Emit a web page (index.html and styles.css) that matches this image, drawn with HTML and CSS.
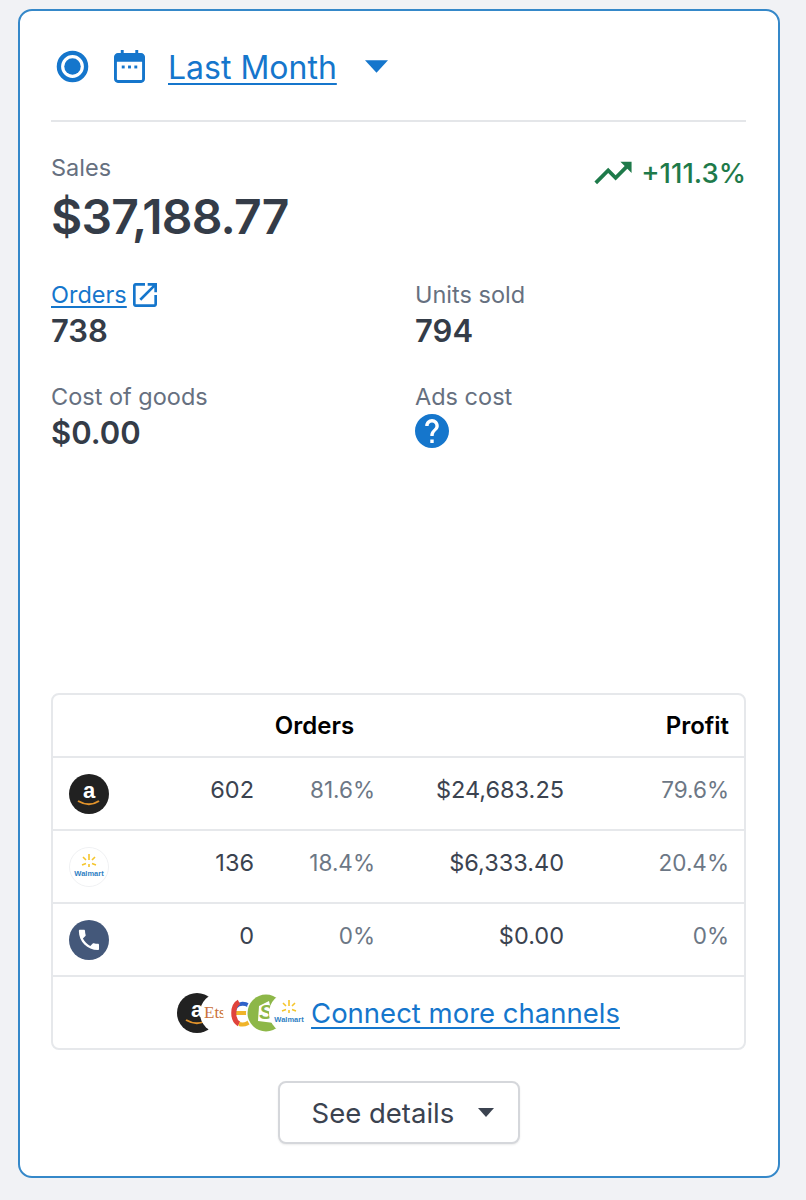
FILE: index.html
```html
<!DOCTYPE html>
<html>
<head>
    <meta charset="UTF-8">
    <link rel="stylesheet" href="styles.css">
</head>
<body>
    <div class="card">
        <div class="range">
            <svg class="radio-icon" viewBox="0 0 34 34"><circle cx="17" cy="17" r="14" fill="none" stroke="#1576cc" stroke-width="4.5"/><circle cx="17" cy="17" r="8.5" fill="#1576cc"/></svg>
            <svg class="cal-icon" viewBox="0 0 32 34"><path fill="#1576cc" d="M7 0h3v3h12V0h3v3h3c2 0 4 2 4 4v23c0 2-2 4-4 4H4c-2 0-4-2-4-4V7c0-2 2-4 4-4h3zM3 12v18c0 .6.4 1 1 1h24c.6 0 1-.4 1-1V12z"/><rect x="8" y="16" width="3" height="3" fill="#1576cc"/><rect x="14.500" y="16" width="3" height="3" fill="#1576cc"/><rect x="21" y="16" width="3" height="3" fill="#1576cc"/></svg>
            <a class="range-link">Last Month</a>
            <svg class="range-caret" viewBox="0 0 24 14"><path fill="#1576cc" d="M0 0h24L12 13z"/></svg>
        </div>

        <div class="sales">
            <div>
                <div class="label">Sales</div>
                <div class="sales-value">$37,188.77</div>
            </div>
            <div class="trend">
                <svg class="trend-icon" viewBox="2 5 20 14"><path fill="#1e7a4a" d="M16 6l2.290 2.290-4.880 4.880-4-4L2 16.590 3.410 18l6-6 4 4 6.300-6.290L22 12V6z"/></svg>
                <span>+111.3%</span>
            </div>
        </div>

        <div class="stats">
            <div class="stat">
                <div class="label label-link"><a>Orders</a><svg class="ext-icon" viewBox="3 3 18 18"><path fill="#1576cc" d="M19 19H5V5h7V3H5c-1.110 0-2 .9-2 2v14c0 1.100.89 2 2 2h14c1.100 0 2-.9 2-2v-7h-2v7zM14 3v2h3.590l-9.830 9.830 1.410 1.410L19 6.410V10h2V3h-7z"/></svg></div>
                <div class="stat-value">738</div>
            </div>
            <div class="stat">
                <div class="label">Units sold</div>
                <div class="stat-value">794</div>
            </div>
            <div class="stat">
                <div class="label">Cost of goods</div>
                <div class="stat-value">$0.00</div>
            </div>
            <div class="stat">
                <div class="label">Ads cost</div>
                <svg class="help-icon" viewBox="2 2 20 20"><path fill="#1576cc" d="M12 2C6.480 2 2 6.480 2 12s4.480 10 10 10 10-4.480 10-10S17.520 2 12 2zm1 17h-2v-2h2v2zm2.070-7.750l-.9.920C13.450 12.900 13 13.500 13 15h-2v-.5c0-1.100.45-2.100 1.170-2.830l1.240-1.260c.37-.36.59-.86.59-1.410 0-1.100-.9-2-2-2s-2 .9-2 2H8c0-2.210 1.790-4 4-4s4 1.790 4 4c0 .88-.36 1.680-.93 2.250z"/></svg>
            </div>
        </div>

        <div class="channels">
            <div class="row row-head">
                <div></div>
                <div></div>
                <div class="head-orders">Orders</div>
                <div></div>
                <div class="head-profit">Profit</div>
            </div>
            <div class="row">
                <svg class="logo" viewBox="0 0 40 40"><circle cx="20" cy="20" r="20" fill="#212121"/><text x="20" y="24" class="logo-a">a</text><path d="M9 27c7 4 15 4 21 0" fill="none" stroke="#e2932b" stroke-width="2"/></svg>
                <div class="num">602</div>
                <div class="pct">81.6%</div>
                <div class="num">$24,683.25</div>
                <div class="pct">79.6%</div>
            </div>
            <div class="row">
                <svg class="logo" viewBox="0 0 40 40"><circle cx="20" cy="20" r="19.500" fill="#fff" stroke="#f0f1f3"/><path d="M20 7v6M20 20v-3M14 10l3 3M26 10l-3 3M13 18l4-1.500M27 18l-4-1.500" stroke="#f5c52c" stroke-width="1.600" fill="none"/><text x="20" y="29" class="logo-walmart">Walmart</text></svg>
                <div class="num">136</div>
                <div class="pct">18.4%</div>
                <div class="num">$6,333.40</div>
                <div class="pct">20.4%</div>
            </div>
            <div class="row">
                <svg class="logo" viewBox="0 0 40 40"><circle cx="20" cy="20" r="20" fill="#44587a"/><path transform="translate(6.500 6.500) scale(1.120)" fill="#fff" d="M6.620 10.790c1.440 2.830 3.760 5.140 6.590 6.590l2.200-2.200c.27-.27.67-.36 1.020-.24 1.120.37 2.330.57 3.570.57.55 0 1 .45 1 1V20c0 .55-.45 1-1 1-9.390 0-17-7.610-17-17 0-.55.45-1 1-1h3.500c.55 0 1 .45 1 1 0 1.250.2 2.450.57 3.570.11.35.03.74-.25 1.020l-2.200 2.200z"/></svg>
                <div class="num">0</div>
                <div class="pct">0%</div>
                <div class="num">$0.00</div>
                <div class="pct">0%</div>
            </div>
            <div class="connect">
                <div class="logo-stack">
                    <svg class="stack-logo" viewBox="0 0 40 40"><circle cx="20" cy="20" r="20" fill="#212121"/><text x="20" y="24" class="logo-a">a</text><path d="M9 27c7 4 15 4 21 0" fill="none" stroke="#e2932b" stroke-width="2"/></svg>
                    <svg class="stack-logo" viewBox="0 0 40 40"><circle cx="20" cy="20" r="20" fill="#fff"/><text x="4" y="25" class="logo-etsy">Etsy</text></svg>
                    <svg class="stack-logo" viewBox="0 0 40 40"><circle cx="20" cy="20" r="20" fill="#fff"/><path d="M11 20h19" stroke="#f0b429" stroke-width="4"/><path d="M11 20c0-12 16-12 18-2" fill="none" stroke="#2f62c9" stroke-width="4"/><path d="M16 9c-7 4-7 18 0 22" fill="none" stroke="#e0433b" stroke-width="5"/><path d="M16 31c4 1 9 0 12-4" fill="none" stroke="#f0b429" stroke-width="4"/></svg>
                    <svg class="stack-logo" viewBox="0 0 40 40"><circle cx="20" cy="20" r="20" fill="#fff"/><circle cx="20" cy="20" r="18.500" fill="#8db748"/><path fill="#fff" d="M13 13l10-5 5 22-16-2z"/><text x="20" y="26" class="logo-s">S</text></svg>
                    <svg class="stack-logo" viewBox="0 0 40 40"><circle cx="20" cy="20" r="20" fill="#fff"/><path d="M20 7v6M20 20v-3M14 10l3 3M26 10l-3 3M13 18l4-1.500M27 18l-4-1.500" stroke="#f5c52c" stroke-width="1.600" fill="none"/><text x="20" y="29" class="logo-walmart">Walmart</text></svg>
                </div>
                <a class="connect-link">Connect more channels</a>
            </div>
        </div>

        <div class="details">
            <button class="btn-details">See details <svg class="details-caret" viewBox="0 0 16 10"><path fill="#3b4350" d="M0 0h16L8 9z"/></svg></button>
        </div>
    </div>
</body>
</html>
```

FILE: styles.css
```css
body {
    margin: 0;
    padding: 9px 26px 0 18px;
    height: 1200px;
    box-sizing: border-box;
    overflow: hidden;
    font-family: Inter, "Noto Sans", sans-serif;
    background: #f1f2f5;
    color: #3b4350;
}

.card {
    box-sizing: border-box;
    height: 1169px;
    padding: 0 32px 0 31px;
    background: #fff;
    border: 2px solid #3588c9;
    border-radius: 14px;
}

.range {
    display: flex;
    align-items: center;
    box-sizing: border-box;
    height: 111px;
    padding: 2px 0 0 5px;
    border-bottom: 2px solid #e4e6e9;
}

.radio-icon {
    width: 33px;
    height: 33px;
}

.cal-icon {
    width: 31px;
    height: 33px;
    margin-left: 25px;
}

.range-link {
    margin: 2px 0 0 23px;
    font-size: 32px;
    color: #1576cc;
    text-decoration: underline;
    text-underline-offset: 4px;
    text-decoration-thickness: 2px;
}

.range-caret {
    width: 23px;
    height: 14px;
    margin-left: 28px;
}

.sales {
    display: flex;
    justify-content: space-between;
    margin-top: 31px;
}

.label {
    font-size: 23.500px;
    line-height: 30px;
    color: #667080;
}

.sales-value {
    margin-top: 5px;
    font-size: 48px;
    line-height: 58px;
    font-weight: 600;
    color: #343c48;
    letter-spacing: -0.8px;
}

.trend {
    display: flex;
    align-items: center;
    gap: 8px;
    height: 40px;
    font-size: 27.500px;
    font-weight: 500;
    color: #1e7a4a;
}

.trend-icon {
    width: 40px;
    height: 26px;
}

.stats {
    display: grid;
    grid-template-columns: 364px 1fr;
    row-gap: 31px;
    margin-top: 34px;
}

.label-link {
    display: flex;
    align-items: center;
    gap: 6px;
    color: #1576cc;
}

.label-link a {
    text-decoration: underline;
    text-underline-offset: 3px;
}

.ext-icon {
    width: 24px;
    height: 24px;
}

.stat-value {
    margin-top: 1px;
    font-size: 31px;
    line-height: 40px;
    font-weight: 600;
    color: #343c48;
}

.help-icon {
    display: block;
    width: 34px;
    height: 34px;
    margin-top: 2px;
}

.channels {
    margin-top: 240px;
    border: 2px solid #e6e8eb;
    border-radius: 8px;
}

.row {
    display: grid;
    grid-template-columns: 56px 145px 121px 189px 1fr;
    align-items: center;
    height: 73px;
    padding-right: 15px;
    border-top: 2px solid #e6e8eb;
    box-sizing: border-box;
    font-size: 23.500px;
}

.row-head {
    height: 61px;
    border-top: 0;
    font-size: 24px;
    font-weight: 600;
    color: #000;
}

.head-orders {
    text-align: center;
}

.head-profit {
    text-align: right;
}

.logo {
    width: 40px;
    height: 40px;
    margin-left: 16px;
}

.num {
    margin-bottom: 8px;
    text-align: right;
}

.pct {
    margin-bottom: 8px;
    text-align: right;
    font-size: 22.500px;
    color: #6c7785;
}

.logo-a {
    font-family: "Liberation Sans", sans-serif;
    font-size: 22px;
    font-weight: 700;
    fill: #fff;
    text-anchor: middle;
}

.logo-walmart {
    font-family: "Liberation Sans", sans-serif;
    font-size: 7.500px;
    font-weight: 700;
    fill: #2f7fc4;
    text-anchor: middle;
}

.logo-etsy {
    font-family: "Liberation Serif", serif;
    font-size: 17px;
    fill: #c9703a;
}

.logo-s {
    font-family: "Liberation Sans", sans-serif;
    font-size: 20px;
    font-weight: 700;
    font-style: italic;
    fill: #8db748;
    text-anchor: middle;
}

.connect {
    display: flex;
    align-items: center;
    justify-content: center;
    height: 73px;
    border-top: 2px solid #e6e8eb;
    box-sizing: border-box;
}

.logo-stack {
    display: flex;
    margin-right: 2px;
}

.stack-logo {
    width: 40px;
    height: 40px;
}

.stack-logo + .stack-logo {
    margin-left: -17px;
}

.connect-link {
    font-size: 27.500px;
    color: #1576cc;
    text-decoration: underline;
    text-underline-offset: 4px;
}

.details {
    display: flex;
    justify-content: center;
    margin-top: 31px;
}

.btn-details {
    display: flex;
    align-items: center;
    gap: 24px;
    width: 242px;
    height: 63px;
    padding: 0 0 0 32px;
    background: #fff;
    border: 2px solid #d5d7db;
    border-radius: 8px;
    box-shadow: 0 1px 2px rgba(0, 0, 0, 0.08);
    font-family: inherit;
    font-size: 27.500px;
    color: #3b4350;
}

.details-caret {
    width: 16px;
    height: 10px;
}
```
